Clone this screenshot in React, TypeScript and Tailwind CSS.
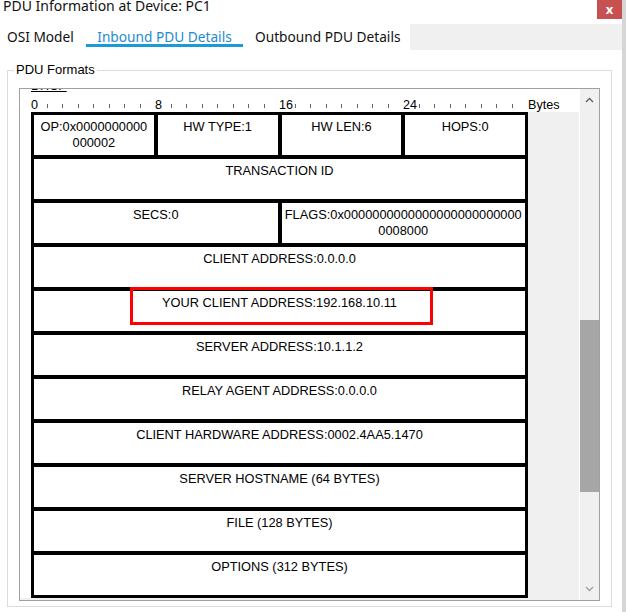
import React from "react";

const rows: { cells: React.ReactNode[] }[] = [
  {
    cells: [
      <>
        OP:0x0000000000
        <br />
        000002
      </>,
      "HW TYPE:1",
      "HW LEN:6",
      "HOPS:0",
    ],
  },
  { cells: ["TRANSACTION ID"] },
  {
    cells: [
      "SECS:0",
      <>
        FLAGS:0x0000000000000000000000000
        <br />
        0008000
      </>,
    ],
  },
  { cells: ["CLIENT ADDRESS:0.0.0.0"] },
  { cells: ["YOUR CLIENT ADDRESS:192.168.10.11"] },
  { cells: ["SERVER ADDRESS:10.1.1.2"] },
  { cells: ["RELAY AGENT ADDRESS:0.0.0.0"] },
  { cells: ["CLIENT HARDWARE ADDRESS:0002.4AA5.1470"] },
  { cells: ["SERVER HOSTNAME (64 BYTES)"] },
  { cells: ["FILE (128 BYTES)"] },
  { cells: ["OPTIONS (312 BYTES)"] },
];

function Ruler() {
  return (
    <div className="flex h-[15px] pl-[11px] text-[12.6px] text-black bg-white">
      {Array.from({ length: 32 }, (_, k) =>
        k % 8 === 0 ? (
          <div key={k} className="w-[15.5px] shrink-0 whitespace-nowrap pt-[2px] leading-[13px]">
            {k}
          </div>
        ) : (
          <div key={k} className="w-[15.5px] shrink-0 flex items-end pb-[4px]">
            <div className="w-px h-[4px] bg-[#5b6479]" />
          </div>
        )
      )}
      <div className="ml-[1px] pt-[2px] leading-[13px]">Bytes</div>
    </div>
  );
}

function FormatTable() {
  return (
    <div className="w-[497px] shrink-0 bg-black p-[3px] flex flex-col gap-[4px] text-[12.8px] leading-[16px] text-black">
      {rows.map((row, i) => (
        <div key={i} className="flex gap-[4px] relative">
          {row.cells.map((c, j) => (
            <div key={j} className="flex-1 h-[40px] bg-white pt-[4px] text-center whitespace-nowrap">
              {c}
            </div>
          ))}
          {/* highlight drawn over the yiaddr field */}
          {i === 4 && (
            <div className="absolute left-[96px] top-[-4px] w-[303px] h-[38px] border-[3px] border-[#ff0000]" />
          )}
        </div>
      ))}
    </div>
  );
}

export default function App() {
  return (
    <div className="w-[626px] h-[612px] bg-white flex overflow-hidden" style={{ fontFamily: "'Liberation Sans', Arial, sans-serif" }}>
      <div className="w-[622px] flex flex-col">
        {/* title bar */}
        <div className="h-[24px] flex items-start justify-between" style={{ fontFamily: "'Noto Sans', sans-serif" }}>
          <div className="pl-[3px] -mt-[4px] text-[14px] leading-[20px] text-[#111]">
            PDU Information at Device: PC1
          </div>
          <div className="w-[25px] h-[19px] bg-[#c75050] text-white flex items-center justify-center text-[13px] font-bold leading-none">
            x
          </div>
        </div>
        {/* tabs */}
        <div className="h-[26px] flex text-[13.7px] leading-[15px] text-[#111]" style={{ fontFamily: "'Noto Sans', sans-serif" }}>
          <div className="w-[86px] pl-[7px] pt-[5px]">OSI Model</div>
          <div className="w-[157px] pt-[5px] flex flex-col">
            <span className="text-center text-[#1e8bd0]">Inbound PDU Details</span>
            <div className="h-[3px] bg-[#1a9bd7]" />
          </div>
          <div className="w-[167px] pl-[12px] pt-[5px]">Outbound PDU Details</div>
          <div className="flex-1 bg-[#f0f0f0]" />
        </div>
        {/* group box */}
        <div className="relative mt-[20px] ml-[7px] w-[605px] h-[537px] border border-[#dcdcdc] pt-[17px] pl-[11px] pr-[11px]">
          <div className="absolute left-[6px] top-[-9px] bg-white px-[2px] text-[13px] leading-[16px] text-black">
            PDU Formats
          </div>
          <div className="h-[513px] border border-[#a0a0a0] flex">
            <div className="flex-1 bg-[#f0f0f0] overflow-hidden flex flex-col">
              <div className="-mt-[10px] bg-white">
                <div className="pl-[11px] h-[14px] leading-[14px] text-[12.6px] underline">DHCP</div>
                <div className="h-[4px]" />
                <Ruler />
              </div>
              <div className="flex">
                <div className="w-[11px] shrink-0 bg-white" />
                <FormatTable />
              </div>
            </div>
            <div className="w-[20px] bg-[#f0f0f0] border-l border-white flex flex-col items-center">
              <svg width="9" height="6" viewBox="0 0 9 6" className="mt-[8px]">
                <path d="M1 5 L4.5 1.5 L8 5" fill="none" stroke="#606060" strokeWidth="1.4" />
              </svg>
              <div className="w-[19px] h-[172px] bg-[#a6a6a6] mt-[217px]" />
              <svg width="9" height="6" viewBox="0 0 9 6" className="mb-[8px] mt-auto">
                <path d="M1 1 L4.5 4.5 L8 1" fill="none" stroke="#a0a0a0" strokeWidth="1.4" />
              </svg>
            </div>
          </div>
        </div>
      </div>
      <div className="w-[4px] bg-[#d6d6d6]" />
    </div>
  );
}
